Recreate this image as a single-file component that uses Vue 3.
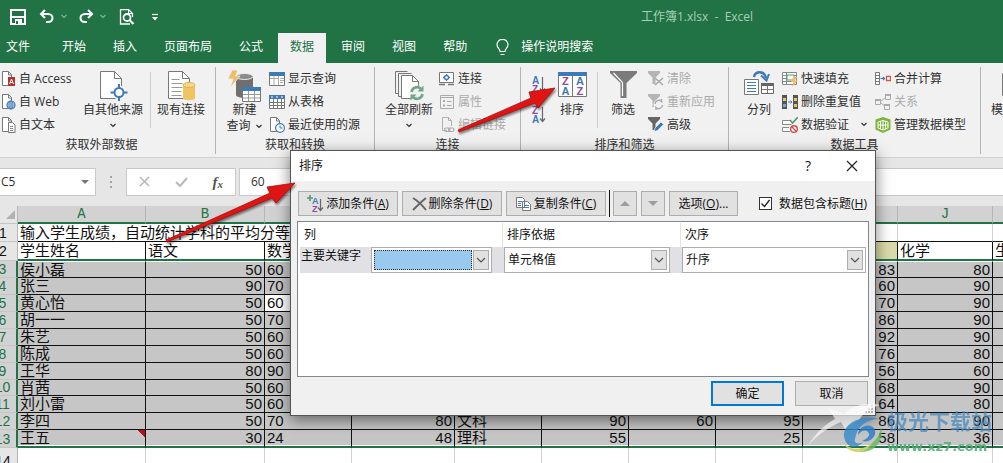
<script setup>
import { h, ref } from 'vue'

const page = '<path d="M1.5 .5h6l3 3v11h-9z" fill="#fff" stroke="#777"/><path d="M7.500 .5v3.500h3.500" fill="none" stroke="#777"/>'
const bigPage = '<path d="M3.500 1.500h14l7 7v20h-21z" fill="#fff" stroke="#777"/><path d="M17.500 1.500v7h7" fill="none" stroke="#777"/>'
const letters = (top, bottom, c1, c2) =>
  `<text x="1" y="8" font-family="Liberation Sans" font-size="10" font-weight="bold" fill="${c1}">${top}</text><text x="1" y="17" font-family="Liberation Sans" font-size="10" font-weight="bold" fill="${c2}">${bottom}</text><path d="M11.500 1v14M9 12.500l2.500 3 2.500-3" fill="none" stroke="#666" stroke-width="1.200"/>`

const icons = {
  save: '<path d="M1 1h14v14H1z" fill="none" stroke="#fff" stroke-width="2"/><path d="M3 2h10v5H3z" fill="#217346"/><path d="M2 8h12" stroke="#fff" stroke-width="2"/><path d="M5 10h7v5H5z" fill="#fff"/><path d="M6 12h2v3H6z" fill="#217346"/>',
  undo: '<path d="M6 1L2 5l4 4M2.500 5H9c6 0 6 8 0 8H7" fill="none" stroke="#fff" stroke-width="2"/>',
  redo: '<path d="M10 1l4 4-4 4M13.500 5H7c-6 0-6 8 0 8h2" fill="none" stroke="#fff" stroke-width="2"/>',
  preview: '<path d="M11 15H1.500V.5h8l4 4V8" fill="none" stroke="#fff" stroke-width="1.300"/><path d="M9.500 .5v4h4" fill="none" stroke="#fff"/><circle cx="8" cy="8.500" r="3.500" fill="#217346" stroke="#fff" stroke-width="1.800"/><path d="M10.500 11l4 4" stroke="#fff" stroke-width="2.200"/>',
  more: '<path d="M1 1.500h6" stroke="#fff" stroke-width="1.200"/><path d="M1 4h6L4 7.500z" fill="#fff"/>',
  chev: '<path d="M1.500 2L4 4.500 6.500 2" fill="none" stroke="currentColor" stroke-width="1.200"/>',
  bulb: '<path d="M4 12.500c0-3-3-3.500-3-7a5.500 5.200 0 0 1 11 0c0 3.500-3 4-3 7zM4.500 15.500h4" fill="none" stroke="#fff" stroke-width="1.200"/>',
  access: page + '<path d="M7 6h7v9H7z" fill="#b5302f"/><path d="M8.500 13l2-5 2 5M9.200 11.500h2.600" fill="none" stroke="#fff"/>',
  web: page + '<circle cx="10" cy="11" r="4" fill="#fff" stroke="#3f7ab8" stroke-width="1.200"/><path d="M6 11h8M10 7v8M7 9h6M7 13h6" stroke="#3f7ab8" stroke-width=".8"/><ellipse cx="10" cy="11" rx="2" ry="4" fill="none" stroke="#3f7ab8" stroke-width=".8"/>',
  text: page + '<path d="M7.500 5.500h4l2.500 2.500v7.500H7.500z" fill="#fff" stroke="#777"/><path d="M9 9.500h3M9 11.500h3M9 13.500h3" stroke="#888"/>',
  other: bigPage + '<circle cx="22" cy="22.500" r="7" fill="#f7f7f7"/><circle cx="22" cy="22.500" r="4.500" fill="#fff" stroke="#3f7ab8" stroke-width="2"/><path d="M22 14v4.500M22 26.500V31M13.500 22.500H18M26 22.500h4.500" stroke="#3f7ab8" stroke-width="2"/>',
  existing: bigPage + '<path d="M6.500 9.500h8M6.500 13.500h11M6.500 17.500h11M6.500 21.500h10M6.500 25.500h10" stroke="#999"/><path d="M18 15v13c0 3 12 3 12 0V15" fill="#f0c463"/><ellipse cx="24" cy="15" rx="6" ry="2.500" fill="#f6d78e" stroke="#e3b04c"/>',
  query: '<path d="M8 6v19h17V6z" fill="#6f6f6f"/><ellipse cx="16.500" cy="25" rx="8.500" ry="3" fill="#6f6f6f"/><ellipse cx="16.500" cy="6.500" rx="8.500" ry="3" fill="#8b8b8b" stroke="#eee"/><path d="M4 0h6L7.500 6H12L2 18l3-9H0z" fill="#efbc68" stroke="#f1f1f1" stroke-width=".8"/><path d="M14.500 17.500h18v14h-18z" fill="#fff" stroke="#777"/><path d="M14 17h19v4H14z" fill="#3f7ab8"/><path d="M15 24.500h17M15 28h17M20.500 21v10M26.500 21v10" stroke="#999"/>',
  showq: '<path d="M.5 1.500h15v13H.5z" fill="#fff" stroke="#777"/><path d="M0 1h16v4H0z" fill="#3f7ab8"/><path d="M1 7.500h8M9.500 5v9M11 7.500h4M11 9.500h4M11 11.500h3M5 5v9" stroke="#aaa"/>',
  table: '<path d="M.5 1.500h15v13H.5z" fill="#fff" stroke="#777"/><path d="M0 1h16v4H0z" fill="#3f7ab8"/><path d="M1 8.500h14M1 11.500h14M4.500 5v9M8.500 5v9M12.500 5v9" stroke="#777"/><path d="M2 3h2M7 3h2M12 3h2" stroke="#fff"/>',
  recent: page + '<circle cx="11" cy="11" r="4.400" fill="#fff" stroke="#3f7ab8" stroke-width="1.200"/><path d="M11 8.500V11h2.500" fill="none" stroke="#3f7ab8"/>',
  refresh: '<path d="M1.500 1.500h12M1.500 1.500v22h3M4.500 3.500h13M4.500 3.500v23h3" fill="none" stroke="#777"/><path d="M7.500 5.500h11l6 6v17h-17z" fill="#fff" stroke="#777"/><path d="M18.500 5.500v6h6" fill="none" stroke="#777"/><circle cx="23" cy="23" r="7.500" fill="#f1f1f1"/><path d="M17.500 22a5.500 5.500 0 0 1 9.500-3M28.500 24a5.500 5.500 0 0 1-9.500 3" fill="none" stroke="#6fa68c" stroke-width="2.600"/><path d="M29.500 15.500v6h-6zM16.500 30.500v-6h6z" fill="#6fa68c"/>',
  conn: '<path d="M.5 1.500h14v10H.5z" fill="#fff" stroke="#777"/><path d="M0 13.500h6M9 13.500h6" stroke="#777" stroke-width="1.500"/><circle cx="7.500" cy="6.500" r="2" fill="none" stroke="#3f7ab8" stroke-width="1.300"/><path d="M7.500 3v2M7.500 8v2M4 6.500h2M9 6.500h2" stroke="#3f7ab8" stroke-width="1.300"/>',
  props: '<path d="M1.500 1.500h13v13h-13zM2 3.500h12" fill="none" stroke="#aaa"/><path d="M4 6h2v2H4zM4 10.500h2v2H4z" fill="#aaa"/><path d="M8 7.500h4.500M8 11.500h4.500" stroke="#aaa"/>',
  links: '<path d="M8 13.500H3.500V.5h6l3 3V9M9.500 .5v3h3" fill="none" stroke="#b0b0b0"/><rect x="5.500" y="11" width="5.500" height="3.500" rx="1.700" fill="none" stroke="#aaa" stroke-width="1.200"/><rect x="9.500" y="11" width="5.500" height="3.500" rx="1.700" fill="none" stroke="#aaa" stroke-width="1.200"/>',
  az: letters('A', 'Z', '#3f7ab8', '#8e4b9e'),
  za: letters('Z', 'A', '#8e4b9e', '#3f7ab8'),
  sort: '<path d="M.5 2.500h28v24H.5z" fill="#fff" stroke="#777"/><path d="M0 2h29v4H0z" fill="#3f7ab8"/><path d="M14.500 6v20" stroke="#777"/><g font-family="Liberation Sans" font-size="11" font-weight="bold"><text x="4" y="15" fill="#8e4b9e">Z</text><text x="3.500" y="25" fill="#3f7ab8">A</text><text x="18" y="15" fill="#3f7ab8">A</text><text x="18.500" y="25" fill="#8e4b9e">Z</text></g>',
  filter: '<path d="M1 1h27v2L17.500 13v15h-6V13L1 3z" fill="#7b7b7b"/><path d="M4.500 3l9 9.500V26" fill="none" stroke="#fff" stroke-width="1.200"/>',
  clear: '<path d="M0 0h12v2L7.500 6.500V13h-3V6.500L0 2z" fill="#b5b5b5"/><path d="M7 7l8 7M15 7l-8 7" stroke="#a8a8a8" stroke-width="1.500"/>',
  reapply: '<path d="M0 0h12v2L7.500 6.500V13h-3V6.500L0 2z" fill="#b5b5b5"/><circle cx="10.500" cy="10.500" r="5" fill="#f1f1f1"/><path d="M7 10a3.800 3.800 0 0 1 6.500-2.500V5M14.500 11A3.800 3.800 0 0 1 8 13.500V16" fill="none" stroke="#aaa" stroke-width="1.500"/>',
  advanced: '<path d="M0 0h12v2L7.500 6.500V13h-3V6.500L0 2z" fill="#666"/><path d="M6 14.500l1-3.500L13 5l2.500 2.500-6 6z" fill="#3f7ab8" stroke="#f1f1f1" stroke-width=".7"/>',
  split: '<path d="M.5 9.500h14v15H.5z" fill="#fff" stroke="#777"/><path d="M3 12.500h9M3 15.500h9M3 18.500h9M3 21.500h9" stroke="#3f7ab8" stroke-width="1.200"/><path d="M17.500 13.500h12v10h-12z" fill="#fff" stroke="#666"/><path d="M17 13h13v3H17z" fill="#666"/><path d="M18 19.500h11M23.500 16v7" stroke="#777"/><path d="M10 7c1-6 10-7 12 1" fill="none" stroke="#3f7ab8" stroke-width="2.400"/><path d="M17 5.500l5.500 5L25 4" fill="none" stroke="#3f7ab8" stroke-width="2"/>',
  flash: '<path d="M.5 1.500h14v12H.5zM1 4.500h13M1 7.500h13M1 10.500h13M4.500 2v11" fill="#fff" stroke="#888"/><path d="M5 4h7v5H5z" fill="#fff" stroke="#559974"/><path d="M11 6h4l-2 3.500h3l-6 6.500 1.500-5H9z" fill="#f0bd69"/>',
  dedupe: '<path d="M0 1h5v14H0zM11 1h5v14h-5z" fill="#555"/><path d="M1 4h3v3H1zM12 4h3v3h-3z" fill="#e6c56b"/><path d="M1 10h3v3H1z" fill="#7ba5cd"/><path d="M12 10h3v3h-3z" fill="#e6c56b"/><path d="M6 8h4M8.500 6.500L10 8 8.500 9.500" fill="none" stroke="#3f7ab8"/>',
  valid: '<path d="M8 3.500H.5v4h9M7 10.500H.5v4H8" fill="#fff" stroke="#888"/><path d="M8 3l2.500 3L16 0" fill="none" stroke="#559974" stroke-width="1.600"/><circle cx="12" cy="12" r="3.300" fill="#fff" stroke="#d34b48" stroke-width="1.400"/><path d="M9.800 9.800l4.400 4.400" stroke="#d34b48" stroke-width="1.300"/>',
  merge: '<path d="M.5 1.500h4v12h-4zM1 4.500h3M1 7.500h3M1 10.500h3" fill="#fff" stroke="#777"/><path d="M5.500 7.500h4M8 6l1.500 1.500L8 9" fill="none" stroke="#3f7ab8" stroke-width="1.200"/><path d="M11.500 5.500h4v4h-4z" fill="#fff" stroke="#cf5b45" stroke-width="1.300"/>',
  relation: '<path d="M.5 5.500h5v5h-5zM10.500 .5h5v5h-5zM9.500 10.500h5v5h-5zM6 7l4-3M6 9l3.500 3" fill="none" stroke="#aaa"/><path d="M0 5h6v2H0zM10 0h6v2h-6zM9 10h6v2H9z" fill="#aaa"/>',
  model: '<path d="M8 0l7.500 2.500v10L8 16 .5 12.500v-10z" fill="#7cb638"/><path d="M3 5l5-1.500L13 5v6l-5 2-5-2zM8 3.500V13M5.500 4v8M10.500 4v8M3 8h10" fill="none" stroke="#fff"/>',
  whatif: '<path d="M3.500 3.500h24v22h-24z" fill="#fff" stroke="#777"/>',
  cancel: '<path d="M1 1l9 9M10 1l-9 9" stroke="#b9b9b9" stroke-width="1.600"/>',
  check: '<path d="M1 6l4 4 7-8" fill="none" stroke="#b9b9b9" stroke-width="2"/>',
  add: '<path d="M3 0v6M0 3h6" stroke="#559974" stroke-width="1.600"/><text x="5" y="9" font-family="Liberation Sans" font-size="9" font-weight="bold" fill="#3f7ab8">A</text><text x="5" y="17" font-family="Liberation Sans" font-size="9" font-weight="bold" fill="#8e4b9e">Z</text><path d="M13.500 4v11M11 12.500l2.500 3 2.500-3" fill="none" stroke="#666" stroke-width="1.200"/>',
  del: '<path d="M1 1c5 3 9 7 13 12M14 1C9 5 5 9 1 13" fill="none" stroke="#666" stroke-width="2"/>',
  copy: '<path d="M.5 .5h6l2 2v8h-8zM6.500 4.500h5l3 3v6h-8z" fill="#fff" stroke="#777"/><path d="M2 4.500h4M2 6.500h3M2 8.500h3M8 8.500h5M8 10.500h5" stroke="#3f7ab8"/>',
  close: '<path d="M1 1l10 10M11 1L1 11" stroke="#222" stroke-width="1.200"/>',
  arrowUp: '<path d="M0 6l5-5 5 5z" fill="#9d9d9d"/>',
  arrowDown: '<path d="M0 1l5 5 5-5z" fill="#9d9d9d"/>',
  drop: '<path d="M0 1l4 4 4-4z" fill="#777"/>',
  dropChev: '<path d="M1 1l4 4 4-4" fill="none" stroke="#555" stroke-width="1.200"/>',
  tick: '<path d="M1.500 4.500l3 3 5-6.500" fill="none" stroke="#222" stroke-width="1.300"/>'
}

const Ico = (p) =>
  h('svg', { width: p.w || 16, height: p.h || 16, viewBox: `0 0 ${p.w || 16} ${p.h || 16}`, innerHTML: icons[p.n], 'aria-hidden': 'true' })
Ico.props = ['n', 'w', 'h']

const tabs = ['文件', '开始', '插入', '页面布局', '公式', '数据', '审阅', '视图', '帮助']

const external = [['access', '自 Access'], ['web', '自 Web'], ['text', '自文本']]
const transform = [['showq', '显示查询'], ['table', '从表格'], ['recent', '最近使用的源']]
const connections = [['conn', '连接'], ['props', '属性', true], ['links', '编辑链接', true]]
const filters = [['clear', '清除', true], ['reapply', '重新应用', true], ['advanced', '高级']]
const tools = [['flash', '快速填充'], ['dedupe', '删除重复值'], ['valid', '数据验证', false, true]]
const tools2 = [['merge', '合并计算'], ['relation', '关系', true], ['model', '管理数据模型']]

const columns = 'ABCDEFGHIJK'.split('')
const header = ['学生姓名', '语文', '数学', '', '', '', '', '', '', '化学', '生物']
const rows = [
  ['侯小磊', 50, '60', '', '', '', '', '', 83, 80, ''],
  ['张三', 90, '70', '', '', '', '', '', 60, 90, ''],
  ['黄心怡', 50, '60', '', '', '', '', '', 70, 90, ''],
  ['胡一一', 50, '70', '', '', '', '', '', 86, 90, ''],
  ['朱艺', 50, '60', '', '', '', '', '', 92, 90, ''],
  ['陈成', 50, '60', '', '', '', '', '', 76, 80, ''],
  ['王华', 80, '90', '', '', '', '', '', 56, 60, ''],
  ['肖茜', 50, '60', '', '', '', '', '', 68, 90, ''],
  ['刘小雷', 50, '60', '', '', '', '', '', 64, 80, ''],
  ['李四', 50, '70', 80, '文科', 90, 60, 95, 86, 90, ''],
  ['王五', 30, '24', 48, '理科', 55, '', 25, 58, 36, '']
]
const hasHeader = ref(true)
</script>

<template>
  <div class="app">
    <header class="titlebar">
      <button aria-label="保存"><Ico n="save" /></button>
      <button class="q-undo" aria-label="撤消"><Ico n="undo" /><Ico class="faint" n="chev" :w="8" :h="7" /></button>
      <button class="q-redo" aria-label="恢复"><Ico n="redo" /><Ico class="faint" n="chev" :w="8" :h="7" /></button>
      <button class="q-prev" aria-label="打印预览"><Ico n="preview" /></button>
      <button class="q-more" aria-label="自定义"><Ico n="more" :w="8" :h="8" /></button>
      <span class="title">工作簿1.xlsx&nbsp; -&nbsp; Excel</span>
    </header>
    <nav class="tabs">
      <button v-for="t in tabs" :key="t" :class="{ active: t === '数据', file: t === '文件' }">{{ t }}</button>
      <button class="tell"><Ico n="bulb" :w="13" :h="16" />操作说明搜索</button>
    </nav>

    <section class="ribbon">
      <div class="group g1">
        <div class="body">
          <div class="stack"><button v-for="[i, t] in external" :key="t"><Ico :n="i" />{{ t }}</button></div>
          <button class="big"><Ico n="other" :w="32" :h="32" /><span>自其他来源</span><Ico n="chev" :w="8" :h="7" /></button>
          <i class="sep"></i>
          <button class="big"><Ico n="existing" :w="32" :h="32" /><span>现有连接</span></button>
        </div>
        <div class="label">获取外部数据</div>
      </div>
      <div class="group g2">
        <div class="body">
          <button class="big"><Ico n="query" :w="34" :h="32" /><span>新建</span><span class="inline">查询<Ico n="chev" :w="8" :h="7" /></span></button>
          <div class="stack"><button v-for="[i, t] in transform" :key="t"><Ico :n="i" />{{ t }}</button></div>
        </div>
        <div class="label">获取和转换</div>
      </div>
      <div class="group g3">
        <div class="body">
          <button class="big"><Ico n="refresh" :w="31" :h="32" /><span>全部刷新</span><Ico n="chev" :w="8" :h="7" /></button>
          <div class="stack"><button v-for="[i, t, d] in connections" :key="t" :disabled="d"><Ico :n="i" />{{ t }}</button></div>
        </div>
        <div class="label">连接</div>
      </div>
      <div class="group g4">
        <div class="body">
          <div class="azcol">
            <button aria-label="升序"><Ico n="az" :w="16" :h="18" /></button>
            <button aria-label="降序"><Ico n="za" :w="16" :h="18" /></button>
          </div>
          <button class="big"><Ico n="sort" :w="29" :h="32" /><span>排序</span></button>
          <i class="sep"></i>
          <button class="big"><Ico n="filter" :w="29" :h="32" /><span>筛选</span></button>
          <div class="stack"><button v-for="[i, t, d] in filters" :key="t" :disabled="d"><Ico :n="i" />{{ t }}</button></div>
        </div>
        <div class="label">排序和筛选</div>
      </div>
      <div class="group g5">
        <div class="body">
          <button class="big"><Ico n="split" :w="30" :h="32" /><span>分列</span></button>
          <div class="stack"><button v-for="[i, t, d, c] in tools" :key="t" :disabled="d"><Ico :n="i" />{{ t }}<Ico v-if="c" class="more" n="chev" :w="8" :h="7" /></button></div>
          <div class="stack"><button v-for="[i, t, d] in tools2" :key="t" :disabled="d"><Ico :n="i" />{{ t }}</button></div>
        </div>
        <div class="label">数据工具</div>
      </div>
      <div class="group g6">
        <div class="body"><button class="big"><Ico n="whatif" :w="32" :h="32" /><span>模拟分析</span></button></div>
      </div>
    </section>

    <section class="formula">
      <label class="namebox"><input value="C5" aria-label="名称框" /><Ico n="drop" :w="8" :h="6" /></label>
      <span class="dots"><i></i><i></i><i></i></span>
      <div class="fx">
        <button aria-label="取消"><Ico n="cancel" :w="11" :h="11" /></button>
        <button aria-label="输入"><Ico n="check" :w="13" :h="12" /></button>
        <button class="fn" aria-label="插入函数">f<sub>x</sub></button>
      </div>
      <input class="value" value="60" aria-label="编辑栏" />
    </section>

    <main class="sheet">
      <table>
        <colgroup><col class="rh" /><col v-for="c in columns" :key="c" :class="'c' + c" /></colgroup>
        <thead>
          <tr><th class="corner"><i></i></th><th v-for="c in columns" :key="c" scope="col">{{ c }}</th></tr>
        </thead>
        <tbody>
          <tr class="r1"><th scope="row">1</th><td colspan="9">输入学生成绩，自动统计学科的平均分等</td><td></td><td></td></tr>
          <tr class="r2"><th scope="row">2</th><td v-for="(v, i) in header" :key="i" :class="{ tint: i === 8 }">{{ v }}</td></tr>
          <tr v-for="(r, n) in rows" :key="n" class="sel" :class="{ first: n === 0, short: n === 7, last: n === 10 }">
            <th scope="row">{{ n + 3 }}</th>
            <td v-for="(v, i) in r" :key="i" :class="{ num: typeof v === 'number', active: n === 2 && i === 2, note: n === 10 && i === 0 }">{{ v }}</td>
          </tr>
          <tr class="blank"><th scope="row">14</th><td v-for="c in columns" :key="c"></td></tr>
        </tbody>
      </table>
    </main>

    <div class="dialog" role="dialog" aria-labelledby="dlg-title">
      <div class="dlg-head">
        <span id="dlg-title">排序</span>
        <button class="help" aria-label="帮助">?</button>
        <button class="x" aria-label="关闭"><Ico n="close" :w="12" :h="12" /></button>
      </div>
      <div class="dlg-tools">
        <button class="cmd"><Ico n="add" :w="17" :h="18" /><span>添加条件(<u>A</u>)</span></button>
        <button class="cmd"><Ico n="del" :w="15" :h="14" /><span>删除条件(<u>D</u>)</span></button>
        <button class="cmd"><Ico n="copy" :w="16" :h="14" /><span>复制条件(<u>C</u>)</span></button>
        <i class="bar"></i>
        <button class="mini" disabled aria-label="上移"><Ico n="arrowUp" :w="10" :h="7" /></button>
        <button class="mini" disabled aria-label="下移"><Ico n="arrowDown" :w="10" :h="7" /></button>
        <button class="opt">选项(<u>O</u>)...</button>
        <label class="chk"><span class="box"><input v-model="hasHeader" type="checkbox" /><Ico v-if="hasHeader" n="tick" :w="11" :h="9" /></span>数据包含标题(<u>H</u>)</label>
      </div>
      <div class="list">
        <div class="lhead"><span>列</span><span>排序依据</span><span>次序</span></div>
        <div class="lrow">
          <label for="key">主要关键字</label>
          <span class="combo focus"><select id="key"><option></option></select><i><Ico n="dropChev" :w="10" :h="7" /></i></span>
          <span class="combo"><select aria-label="排序依据"><option>单元格值</option></select><i><Ico n="dropChev" :w="10" :h="7" /></i></span>
          <span class="combo"><select aria-label="次序"><option>升序</option></select><i><Ico n="dropChev" :w="10" :h="7" /></i></span>
        </div>
      </div>
      <div class="dlg-foot"><button class="ok">确定</button><button>取消</button></div>
      <svg class="grip" width="9" height="9" viewBox="0 0 9 9"><path d="M6 0h2v2H6zM3 3h2v2H3zM6 3h2v2H6zM0 6h2v2H0zM3 6h2v2H3zM6 6h2v2H6z" fill="#b5b5b5" /></svg>
    </div>

    <svg class="pointer p1" width="110" height="56" viewBox="0 0 110 56">
      <path d="M5 49L78 17l-2-6 26-4-17 20-3-5L6 51z" fill="#e11414" stroke="#a80d0d" stroke-width=".8" />
    </svg>
    <svg class="pointer p2" width="142" height="72" viewBox="0 0 142 72">
      <path d="M5 64l104-47-3-6 28-4-19 20-4-5L6 66z" fill="#e11414" stroke="#a80d0d" stroke-width=".8" />
    </svg>

    <div class="mark">
      <svg width="82" height="56" viewBox="0 0 82 56">
        <path d="M4 45C12 31 22 23 31 18L24 7l16 6C51 3 65 1 76 4 66 7 59 12 55 19l-14 9-4-7C25 26 13 34 4 45z" fill="#fff" opacity=".62" />
        <path d="M40 35c-1-13 19-22 35-17-13 0-22 8-24 20-1 4 3 6 8 3-6 8-18 6-19-6z" fill="#3488cc" opacity=".8" />
        <path d="M42 47c16 4 32-3 35-21 4 18-12 32-35 21z" fill="#65b65a" opacity=".8" />
        <path d="M54 34c0-10 14-13 17-5 2 7-6 13-13 11 6-2 9-7 6-9-3-3-7-1-10 3z" fill="#2d7fc8" opacity=".85" />
        <path d="M40 43c9 7 20 6 28-1-6 11-21 13-28 1z" fill="#e4d765" opacity=".8" />
      </svg>
      <div class="words"><strong>极光下载站</strong><b>www.xz7.com</b></div>
    </div>
  </div>
</template>

<style>
html, body, #app { height: 100%; }
body { margin: 0; overflow: hidden; }
</style>

<style scoped>
.app { position: relative; height: 100%; overflow: hidden; display: flex; flex-direction: column; background: #fff; color: #303030; font: 12px/16px "Open Sans", "Noto Sans CJK SC", sans-serif; }
.app * { box-sizing: border-box; }
button, input, select { font: inherit; color: inherit; margin: 0; padding: 0; border: 0; border-radius: 0; background: none; }
button { white-space: nowrap; }
svg { display: block; flex: none; }
i { font-style: normal; }

.titlebar { display: flex; align-items: center; height: 33px; flex: none; background: #217346; padding-left: 10px; color: #a5d0b5; }
.titlebar button { display: flex; align-items: center; gap: 5px; }
.titlebar .q-undo { margin-left: 13px; }
.titlebar .q-redo { margin-left: 10px; }
.titlebar .q-prev { margin-left: 12px; }
.titlebar .q-more { margin-left: 16px; }
.faint { color: #7fb896; }
.title { flex: 1; padding-left: 482px; white-space: nowrap; }

.tabs { display: flex; gap: 3px; height: 30px; flex: none; background: #217346; color: #fff; }
.tabs button { padding: 0 12px 2px; }
.tabs .file { padding-left: 6px; margin-right: 5px; }
.tabs .active { background: #f1f1f1; color: #217346; }
.tabs .tell { display: flex; align-items: center; gap: 12px; padding-left: 14px; }

.ribbon { display: flex; flex: none; padding: 4px 0 3px; background: #f1f1f1; border-bottom: 1px solid #d2d2d2; overflow: hidden; }
.group { flex: none; border-right: 1px solid #b5b5b5; display: flex; flex-direction: column; height: 87px; }
.body { display: flex; height: 71px; }
.label { text-align: center; line-height: 18px; }
.g1 { width: 216px; }
.g1 .label { padding-right: 12px; }
.g2 { width: 159px; padding-left: 4px; }
.g3 { width: 146px; padding-left: 10px; }
.g4 { width: 208px; padding-left: 10px; }
.g5 { width: 252px; padding-left: 7px; }
.g6 { padding-left: 10px; border: 0; }
.g2 .label { padding-right: 4px; }
.g3 .label, .g4 .label { padding-right: 10px; }
.g5 .label { padding-right: 7px; }
.stack { display: flex; flex-direction: column; }
.stack button { display: flex; align-items: center; gap: 3px; height: 23px; }
.stack button:disabled { color: #ababab; }
.stack .more { margin-left: 8px; }
.big { display: flex; flex-direction: column; align-items: center; padding-top: 3px; flex: none; }
.big span + svg { margin-top: 4px; }
.big .inline { display: flex; align-items: center; gap: 4px; }
.big .inline svg { margin: 0; }
.sep { width: 1px; height: 56px; margin-top: 5px; background: #cfcfcf; }
.g1 .stack { width: 79px; }
.g1 .stack button { gap: 2px; padding-left: 1px; }
.g1 .big { width: 68px; }
.g1 .sep { margin-left: 3px; }
.g1 .sep + .big { width: 60px; }
.g2 .big { width: 49px; }
.g3 .big { width: 48px; margin-right: 6px; }
.g4 .big { width: 46px; }
.g4 .sep { margin-left: 2px; }
.g4 .sep + .big { width: 50px; }
.g5 .big { width: 46px; }
.g5 .stack:nth-child(2) { width: 93px; }
.azcol { display: flex; flex-direction: column; gap: 12px; padding-top: 9px; width: 18px; }

.formula { display: flex; align-items: center; flex: none; height: 48px; padding-bottom: 1px; background: #e6e6e6; }
.namebox { display: flex; align-items: center; width: 96px; height: 28px; background: #fff; border: 1px solid #c9c9c9; border-left: 0; padding: 0 6px 0 1px; }
.namebox input { flex: 1; min-width: 0; }
.dots { display: flex; flex-direction: column; gap: 3px; margin: 0 14px; width: 2px; }
.dots i { width: 2px; height: 2px; background: #a5a5a5; }
.fx { display: flex; align-items: center; justify-content: space-between; width: 110px; height: 28px; padding: 0 12px; background: #fff; border: 1px solid #c9c9c9; }
.fn { font: italic bold 15px/16px "Liberation Serif", serif; color: #555; }
.fn sub { font-size: 11px; line-height: 1px; vertical-align: -1px; }
.value { flex: 1; height: 28px; margin-left: 3px; padding-left: 11px; background: #fff; border: 1px solid #c9c9c9; border-right: 0; }

.sheet { flex: 1; overflow: hidden; }
table { table-layout: fixed; width: 1094px; margin-left: -11px; border-collapse: separate; border-spacing: 0; font: 15px/16px "Liberation Sans", "Noto Sans CJK SC", sans-serif; color: #111; }
.rh { width: 29px; }
.cA { width: 128px; }
.cB { width: 119px; }
.cC { width: 87px; }
.cD { width: 103px; }
.cE, .cF, .cG, .cH { width: 87px; }
.cI, .cJ, .cK { width: 95px; }
td, th { height: 17px; padding: 0 2px; overflow: hidden; white-space: nowrap; font-weight: normal; text-align: left; line-height: 16px; }
thead th { height: 18px; background: #d2d2d2; color: #217346; text-align: center; border-right: 1px solid #b5b5b5; border-bottom: 2px solid #217346; font: 14px/15px "Liberation Mono", monospace; }
thead .corner { background: #e6e6e6; border-bottom: 1px solid #c5c5c5; }
.corner i { display: block; width: 0; margin-left: 15px; border-left: 9px solid transparent; border-bottom: 9px solid #b2b2b2; }
tbody th { background: #e6e6e6; text-align: center; border-right: 1px solid #b5b5b5; border-bottom: 1px solid #c5c5c5; font-size: 14px; }
.r1 td { height: 18px; border-bottom: 1px solid #111; border-right: 1px solid #d0d0d0; line-height: 17px; }
.r2 td { height: 19px; border-right: 1px solid #111; border-bottom: 2px solid #217346; line-height: 17px; }
.r2 .tint { background: #dadaa9; }
.sel td { background: #c6c6c6; border-right: 1px solid #111; border-bottom: 1px solid #111; }
.sel th { background: #d2d2d2; color: #217346; border-right: 2px solid #217346; }
.sel td.active { background: #fff; }
.first td { border-top: 1px solid #fff; line-height: 15px; }
.short td, .short th { height: 16px; line-height: 15px; }
.last td { height: 18px; border-bottom: 2px solid #217346; box-shadow: inset 0 -1px #fff; }
.sel .num { text-align: right; }
.sel .note { background: linear-gradient(225deg, #b3131b 5px, #c6c6c6 5px); }
.blank td { border-right: 1px solid #d0d0d0; }
.blank th { height: 26px; }

.dialog { position: absolute; left: 290px; top: 150px; width: 586px; border: 1px solid #555; background: #f0f0f0; box-shadow: 0 4px 14px rgba(0, 0, 0, .5); color: #111; }
.dlg-head { display: flex; align-items: center; height: 30px; padding: 0 17px 0 8px; background: #fff; }
.dlg-head span { flex: 1; }
.help { font-size: 14px; margin-right: 35px; }
.dlg-tools { display: flex; align-items: center; padding: 9px 8px 4px 7px; gap: 3px; }
.dlg-tools button { height: 25px; background: #e1e1e1; border: 1px solid #adadad; }
.cmd { display: flex; align-items: center; justify-content: center; gap: 2px; width: 100px; }
.dlg-tools .cmd + .cmd { margin-left: 1px; }
.bar { width: 1px; height: 27px; background: #111; }
.mini { display: flex; align-items: center; justify-content: center; width: 24px; margin-right: 1px; }
.dlg-tools .opt { width: 69px; }
.chk { display: flex; align-items: center; margin-left: auto; white-space: nowrap; }
.box { position: relative; width: 13px; height: 13px; margin-right: 7px; }
.box input { appearance: none; display: block; width: 13px; height: 13px; border: 1px solid #333; background: #fff; }
.box svg { position: absolute; left: 1px; top: 2px; pointer-events: none; }
.list { height: 156px; margin: 0 6px; border: 1px solid #828790; background: #fff; padding: 1px 2px; }
.lhead { display: grid; grid-template-columns: 202px 178px 1fr; height: 24px; line-height: 24px; }
.lhead span { padding-left: 4px; border-left: 1px solid #e2e2e2; }
.lhead span:first-child { border: 0; }
.lrow { display: grid; grid-template-columns: 71px 133px 178px 1fr; height: 26px; background: #e1e0e5; }
.lrow label { line-height: 18px; padding-left: 1px; }
.combo { position: relative; height: 26px; margin-right: 12px; background: #fff; border: 1px solid #adadad; }
.combo:last-child { margin-right: 0; }
.combo select { appearance: none; width: 100%; height: 24px; padding-left: 3px; outline: none; }
.combo i { position: absolute; right: 2px; top: 2px; width: 16px; height: 20px; background: #e1e1e1; border: 1px solid #adadad; display: flex; align-items: center; justify-content: center; pointer-events: none; }
.focus::before { content: ""; position: absolute; left: 2px; top: 2px; right: 19px; bottom: 2px; background: #99c9ef; border: 1px dotted #333; pointer-events: none; }
.dlg-foot { display: flex; justify-content: flex-end; gap: 11px; padding: 4px 7px 9px; }
.dlg-foot button { width: 73px; height: 25px; background: #e1e1e1; border: 1px solid #adadad; }
.dlg-foot .ok { border: 2px solid #0078d7; }
.grip { position: absolute; right: 1px; bottom: 1px; }

.pointer { position: absolute; filter: drop-shadow(1px 2px 1px rgba(0, 0, 0, .5)); pointer-events: none; }
.p1 { left: 453px; top: 81px; }
.p2 { left: 161px; top: 176px; }
.mark { position: absolute; left: 804px; top: 401px; display: flex; pointer-events: none; }
.words { display: flex; flex-direction: column; padding-top: 5px; margin-left: 1px; }
.words strong { font: bold 21px/28px "Noto Sans CJK SC", sans-serif; color: #4387bd; opacity: .7; }
.words b { margin-top: 5px; font: bold 13px/16px "DejaVu Sans", sans-serif; color: #55ae78; opacity: .9; }
</style>
